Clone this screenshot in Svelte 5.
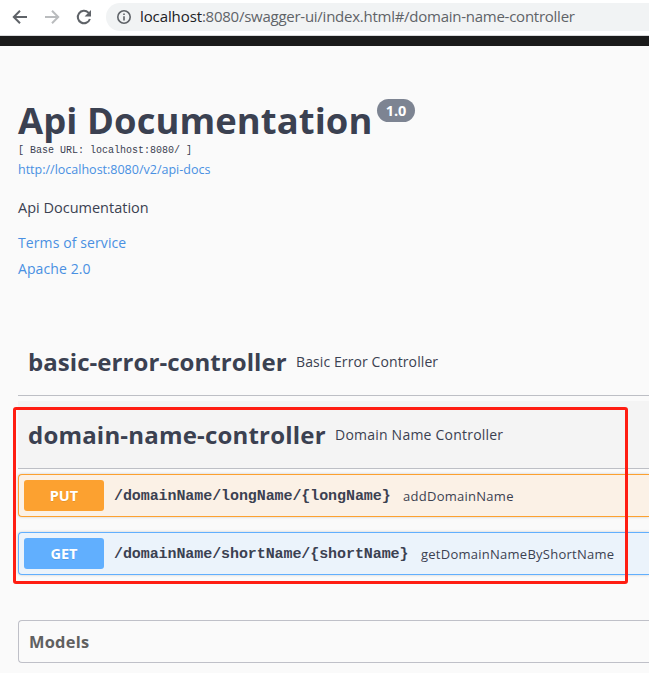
<script>
  const links = ['Terms of service', 'Apache 2.0'];
  const operations = [
    { method: 'PUT', path: '/domainName/longName/{longName}', summary: 'addDomainName' },
    { method: 'GET', path: '/domainName/shortName/{shortName}', summary: 'getDomainNameByShortName' }
  ];
</script>

<div class="page">
  <header class="toolbar">
    <svg class="nav" width="16" height="16" viewBox="0 0 16 16"><path d="M15 8H2M8 1.8L1.8 8L8 14.2" /></svg>
    <svg class="nav off" width="16" height="16" viewBox="0 0 16 16"><path d="M1 8h13M8 1.8L14.2 8L8 14.2" /></svg>
    <svg class="nav reload" width="16" height="16" viewBox="0 0 16 16">
      <path d="M13.9 10A6.2 6.2 0 1 1 12.4 3.6L14 5.2" />
      <path class="solid" d="M15 1v6.4H8.6z" />
    </svg>
    <div class="address">
      <svg width="14" height="14" viewBox="0 0 14 14">
        <circle cx="7" cy="7" r="6.2" />
        <path d="M7 6.2v4.2M7 3.5v1.6" />
      </svg>
      <span class="url"><b>localhost</b>:8080/swagger-ui/index.html#/domain-name-controller</span>
    </div>
  </header>
  <div class="topbar"></div>

  <main>
    <section class="info">
      <div class="heading"><h1>Api Documentation</h1><span class="version">1.0</span></div>
      <pre class="base">[ Base URL: localhost:8080/ ]</pre>
      <a class="docs">http://localhost:8080/v2/api-docs</a>
      <p>Api Documentation</p>
      {#each links as link}
        <a class="link">{link}</a>
      {/each}
    </section>

    <section class="tag"><h2 class="basic">basic-error-controller</h2><small>Basic Error Controller</small></section>
    <section class="tag open"><h2 class="domain">domain-name-controller</h2><small>Domain Name Controller</small></section>

    {#each operations as op}
      <div class="op {op.method.toLowerCase()}">
        <span class="method">{op.method}</span>
        <span class="path">{op.path}</span>
        <span class="summary">{op.summary}</span>
      </div>
    {/each}

    <section class="models"><h4>Models</h4></section>
  </main>
  <div class="marker"></div>
</div>

<style>
  :global(body) { margin: 0; background: #fafafa; }
  .page {
    position: relative; width: 649px; height: 673px; overflow: hidden;
    background: #fafafa; color: #3b4151; font-family: "Open Sans", "Noto Sans", sans-serif;
    white-space: nowrap;
  }
  h1, h2, h4, p, pre { margin: 0; }
  .toolbar {
    box-sizing: border-box; height: 36px; display: flex; align-items: center;
    padding: 0 0 1px 12px; background: #fff; border-bottom: 1px solid #d9dadc;
  }
  .nav { fill: none; stroke: #5f6368; stroke-width: 2; margin-right: 16px; flex: none; }
  .nav.off { stroke: #babcbe; }
  .nav.reload { margin-right: 14px; }
  .nav .solid { fill: #5f6368; stroke: none; }
  .address {
    height: 28px; flex: 1; display: flex; align-items: center; gap: 9px; padding-left: 11px;
    background: #f1f3f4; border-radius: 14px 0 0 14px;
  }
  .address svg { fill: none; stroke: #5f6368; stroke-width: 1.6; flex: none; }
  .url { font-size: 15px; line-height: 27px; height: 28px; color: #5f6368; letter-spacing: -0.255px; }
  .url b { font-weight: 400; color: #202124; letter-spacing: -0.1px; }
  .topbar { height: 10px; background: #1b1b1b; }
  main { padding-left: 18px; }
  .info { height: 282px; padding-top: 50px; box-sizing: border-box; }
  .heading { height: 49px; display: flex; align-items: flex-start; }
  h1 { font-size: 36.4px; line-height: 49px; font-weight: 700; width: 359px; letter-spacing: 0.08px; }
  .version {
    width: 38px; height: 23px; margin-top: 3px; border-radius: 12px; background: #7d8492;
    color: #fff; font-size: 14.5px; font-weight: 700; line-height: 23px; text-align: center;
  }
  .base { font: 10px/12px "Liberation Mono", monospace; height: 12px; }
  a { display: block; color: #4990e2; }
  .docs { font-size: 12.5px; line-height: 18px; margin-top: 4px; }
  p { font-size: 14.5px; line-height: 20px; margin-top: 19px; }
  .link { font-size: 14px; line-height: 26px; letter-spacing: 0.1px; }
  p + .link { margin-top: 12px; }
  .tag {
    height: 68px; box-sizing: border-box; display: flex; align-items: center; gap: 10px;
    padding: 0 0 0 10px; border-bottom: 1px solid #bdbfc5;
  }
  .tag.open { background: #f4f4f4; margin: 5px 0; }
  h2 { font-size: 24px; line-height: 34px; font-weight: 700; flex: none; }
  .basic { width: 258px; letter-spacing: 0.06px; }
  .domain { width: 297px; letter-spacing: 0.19px; }
  small { font-size: 14px; line-height: 20px; letter-spacing: 0.1px; }
  .open small { letter-spacing: 0.22px; }
  .op {
    height: 43px; box-sizing: border-box; display: flex; align-items: center; padding-left: 5px;
    border: 1px solid; border-right: 0; border-radius: 4px 0 0 4px; margin-bottom: 15px;
    box-shadow: 0 0 3px rgba(0, 0, 0, 0.19);
  }
  .put { border-color: #fca130; background: #fbf1e6; }
  .get { border-color: #61affe; background: #ebf3fb; }
  .method {
    width: 80px; height: 31px; border-radius: 3px; color: #fff; font-size: 14.5px; font-weight: 700;
    line-height: 31px; text-align: center; text-shadow: 0 1px 0 rgba(0, 0, 0, 0.1);
  }
  .put .method { background: #fca130; }
  .get .method { background: #61affe; }
  .path {
    font: 700 15px/20px "Liberation Mono", monospace; letter-spacing: -0.08px;
    margin: 3px 12.5px 0 10px;
  }
  .summary { font-size: 13px; line-height: 20px; letter-spacing: 0.26px; }
  .models {
    height: 43px; box-sizing: border-box; margin-top: 45px; padding-left: 10px;
    border: 1px solid #bfc0c8; border-right: 0; border-radius: 4px 0 0 4px;
  }
  h4 { font-size: 16.4px; line-height: 42px; color: #606060; letter-spacing: 0.25px; }
  .marker {
    position: absolute; left: 13px; top: 407px; width: 615px; height: 177px;
    box-sizing: border-box; border: 3px solid #ff1d12; border-radius: 3px;
  }
</style>
